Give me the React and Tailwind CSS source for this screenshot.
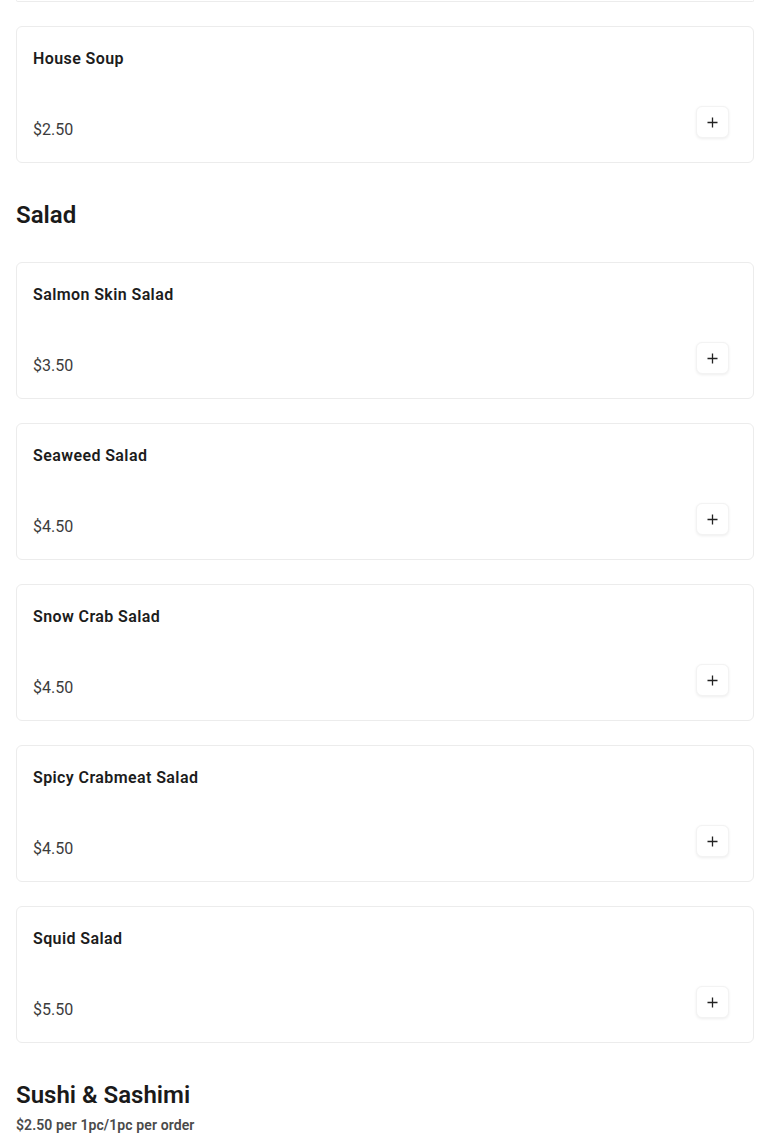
import React from "react";

const sections = [
  {
    title: "Salad",
    items: [
      ["Salmon Skin Salad", "$3.50"],
      ["Seaweed Salad", "$4.50"],
      ["Snow Crab Salad", "$4.50"],
      ["Spicy Crabmeat Salad", "$4.50"],
      ["Squid Salad", "$5.50"],
    ],
  },
];

function Plus() {
  return (
    <svg width="11" height="11" viewBox="0 0 11 11" fill="none" stroke="#222" strokeWidth="1.3">
      <path d="M5.5 0.5v10M0.5 5.5h10" />
    </svg>
  );
}

function Card({ name, price }) {
  return (
    <div className="rounded-md border border-[#ececec] bg-white pl-4 pr-6 pt-5 pb-5">
      <div className="text-base leading-6 font-semibold tracking-[0.4px] text-[#1c1c1c]">{name}</div>
      <div className="mt-[35px] flex items-start justify-between">
        <div className="pt-3 text-base leading-6 text-[#3c3c3c]">{price}</div>
        <button className="flex h-8 w-[33px] items-center justify-center rounded-md border border-[#f3f3f3] bg-white shadow-[0_1px_3px_rgba(0,0,0,0.07)]">
          <Plus />
        </button>
      </div>
    </div>
  );
}

export default function App() {
  return (
    <div
      className="min-h-[1142px] bg-white px-4"
      style={{ fontFamily: "Roboto, 'Liberation Sans', sans-serif" }}
    >
      <div className="h-[2px] rounded-b-md border-x border-b border-[#ececec]" />
      <div className="mt-6">
        <Card name="House Soup" price="$2.50" />
      </div>
      {sections.map((s) => (
        <div key={s.title}>
          <h2 className="pt-9 pb-[31px] text-2xl leading-8 font-semibold text-[#1a1a1a]">{s.title}</h2>
          <div className="flex flex-col gap-6">
            {s.items.map(([n, p]) => (
              <Card key={n} name={n} price={p} />
            ))}
          </div>
        </div>
      ))}
      <h2 className="pt-9 text-2xl leading-8 font-semibold text-[#1a1a1a]">Sushi &amp; Sashimi</h2>
      <div className="mt-1 text-sm leading-5 font-semibold tracking-[0.1px] text-[#4a4a4a]">$2.50 per 1pc/1pc per order</div>
    </div>
  );
}
